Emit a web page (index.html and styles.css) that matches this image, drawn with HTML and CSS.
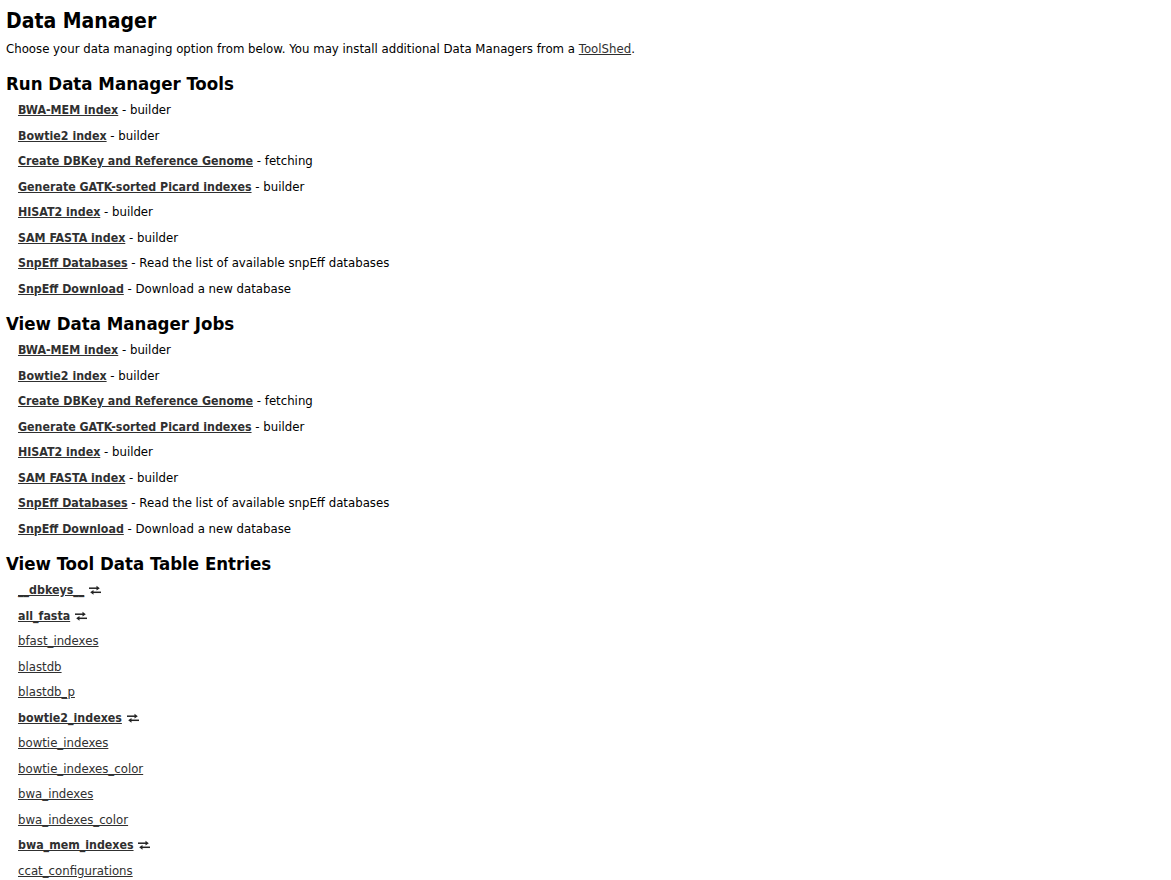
FILE: index.html
```html
<!DOCTYPE html>
<html>
<head>
<meta charset="utf-8">
<link rel="stylesheet" href="styles.css">
</head>
<body>
<h1 class="title">Data Manager</h1>
<p class="intro">Choose your data managing option from below. You may install additional Data Managers from a <a href="#">ToolShed</a>.</p>

<h2 class="section">Run Data Manager Tools</h2>
<ul class="items">
  <li><a class="strong" href="#">BWA-MEM index</a> - builder</li>
  <li><a class="strong" href="#">Bowtie2 index</a> - builder</li>
  <li><a class="strong" href="#">Create DBKey and Reference Genome</a> - fetching</li>
  <li><a class="strong" href="#">Generate GATK-sorted Picard indexes</a> - builder</li>
  <li><a class="strong" href="#">HISAT2 index</a> - builder</li>
  <li><a class="strong" href="#">SAM FASTA index</a> - builder</li>
  <li><a class="strong" href="#">SnpEff Databases</a> - Read the list of available snpEff databases</li>
  <li><a class="strong" href="#">SnpEff Download</a> - Download a new database</li>
</ul>

<h2 class="section">View Data Manager Jobs</h2>
<ul class="items">
  <li><a class="strong" href="#">BWA-MEM index</a> - builder</li>
  <li><a class="strong" href="#">Bowtie2 index</a> - builder</li>
  <li><a class="strong" href="#">Create DBKey and Reference Genome</a> - fetching</li>
  <li><a class="strong" href="#">Generate GATK-sorted Picard indexes</a> - builder</li>
  <li><a class="strong" href="#">HISAT2 index</a> - builder</li>
  <li><a class="strong" href="#">SAM FASTA index</a> - builder</li>
  <li><a class="strong" href="#">SnpEff Databases</a> - Read the list of available snpEff databases</li>
  <li><a class="strong" href="#">SnpEff Download</a> - Download a new database</li>
</ul>

<h2 class="section">View Tool Data Table Entries</h2>
<ul class="items">
  <li><a class="strong" href="#">__dbkeys__</a> <svg class="xchg" viewBox="0 0 12 10" width="12" height="10"><path d="M0 3.2h9" /><path d="M7.5 0.8l3.3 2.4-3.3 2.4z" class="head"/><path d="M12 7.3h-9"/><path d="M4.5 4.9l-3.3 2.4 3.3 2.4z" class="head"/></svg></li>
  <li><a class="strong" href="#">all_fasta</a> <svg class="xchg" viewBox="0 0 12 10" width="12" height="10"><path d="M0 3.2h9" /><path d="M7.5 0.8l3.3 2.4-3.3 2.4z" class="head"/><path d="M12 7.3h-9"/><path d="M4.5 4.9l-3.3 2.4 3.3 2.4z" class="head"/></svg></li>
  <li><a href="#">bfast_indexes</a></li>
  <li><a href="#">blastdb</a></li>
  <li><a href="#">blastdb_p</a></li>
  <li><a class="strong" href="#">bowtie2_indexes</a> <svg class="xchg" viewBox="0 0 12 10" width="12" height="10"><path d="M0 3.2h9" /><path d="M7.5 0.8l3.3 2.4-3.3 2.4z" class="head"/><path d="M12 7.3h-9"/><path d="M4.5 4.9l-3.3 2.4 3.3 2.4z" class="head"/></svg></li>
  <li><a href="#">bowtie_indexes</a></li>
  <li><a href="#">bowtie_indexes_color</a></li>
  <li><a href="#">bwa_indexes</a></li>
  <li><a href="#">bwa_indexes_color</a></li>
  <li><a class="strong" href="#">bwa_mem_indexes</a> <svg class="xchg" viewBox="0 0 12 10" width="12" height="10"><path d="M0 3.2h9" /><path d="M7.5 0.8l3.3 2.4-3.3 2.4z" class="head"/><path d="M12 7.3h-9"/><path d="M4.5 4.9l-3.3 2.4 3.3 2.4z" class="head"/></svg></li>
  <li><a href="#">ccat_configurations</a></li>
  <li><a href="#">ccat_configurations_2</a></li>
</ul>
</body>
</html>
```

FILE: styles.css
```css
html, body {
  margin: 0;
  padding: 0;
  background: #ffffff;
}
body {
  font-family: "DejaVu Sans", "Lucida Grande", sans-serif;
  font-size: 11.75px;
  color: #000;
  padding: 0 6px;
}
a {
  color: #303030;
  text-decoration: underline;
}
.title {
  font-family: "DejaVu Sans Condensed", "DejaVu Sans", sans-serif;
  font-size: 21px;
  font-weight: bold;
  margin: 0;
  padding-top: 8px;
  line-height: 26px;
}
.intro {
  margin: 7px 0 16px 0;
  line-height: 16px;
}
.section {
  font-family: "DejaVu Sans Condensed", "DejaVu Sans", sans-serif;
  font-size: 18.5px;
  font-weight: bold;
  margin: 11px 0 3px 0;
  line-height: 22px;
}
.items {
  list-style: none;
  margin: 0;
  padding: 0 0 0 12px;
}
.items li {
  line-height: 25.5px;
  height: 25.5px;
}
.strong {
  font-family: "DejaVu Sans Condensed", "DejaVu Sans", sans-serif;
  font-size: 12.3px;
  font-weight: bold;
}
.xchg {
  vertical-align: -1px;
  margin-left: 1px;
}
.xchg path {
  stroke: #222;
  stroke-width: 1.5;
  fill: none;
}
.xchg path.head {
  stroke: none;
  fill: #222;
}
```
